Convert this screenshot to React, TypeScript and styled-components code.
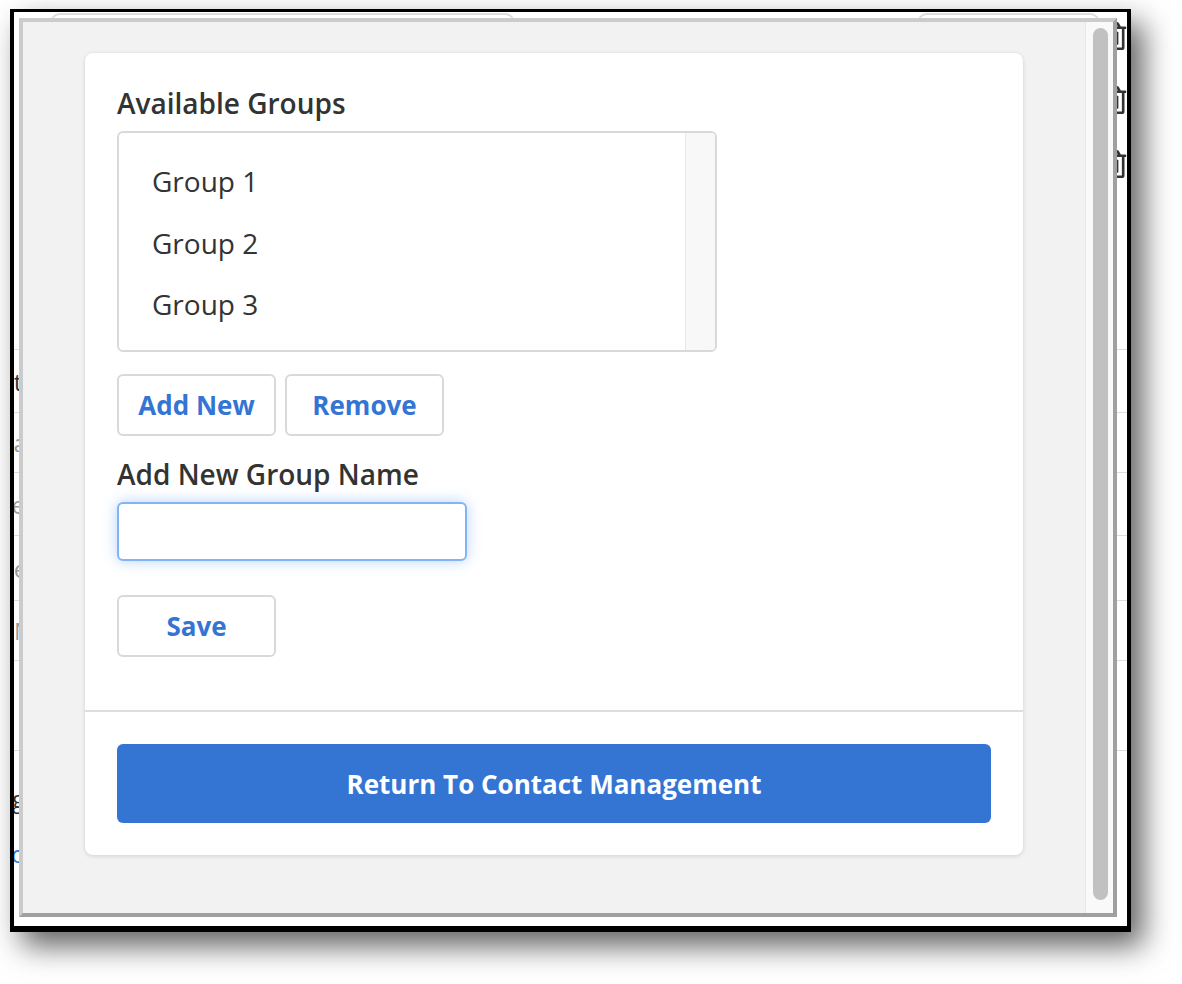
import React from 'react'
import styled, { createGlobalStyle } from 'styled-components'
import { FaRegTrashAlt } from 'react-icons/fa'

const GlobalStyle = createGlobalStyle`
  html, body {
    margin: 0;
    padding: 0;
    background: #fff;
  }
  body {
    font-family: 'Open Sans', 'Liberation Sans', sans-serif;
    color: #333;
  }
  * {
    box-sizing: border-box;
  }
`

const Stage = styled.div`
  width: 1182px;
  height: 984px;
  padding: 9px 0 0 10px;
  background: #fff;
  overflow: hidden;
`

const Window = styled.div`
  position: relative;
  width: 1121px;
  height: 923px;
  border: 4px solid #000;
  border-top-width: 3px;
  border-bottom-width: 6px;
  background: #fff;
  box-shadow: 12px 14px 28px rgba(0, 0, 0, 0.62);
  overflow: hidden;
`

// page behind the modal, only slivers of it show
const BgPage = styled.div`
  display: flex;
  flex-direction: column;
`

const TrashRow = styled.div`
  height: 64px;
  display: flex;
  align-items: flex-start;
  padding: 1px 0 0 36px;
`

const BgField = styled.div<{ $w: number; $ml?: number }>`
  width: ${p => p.$w}px;
  height: 50px;
  margin-left: ${p => p.$ml || 0}px;
  border: 2px solid #ddd;
  border-radius: 10px;
`

const TrashSlot = styled.div`
  margin: 9px 0 0 auto;
  width: 26px;
  color: #333;
  display: flex;
`

const BgSpacer = styled.div`
  height: 145px;
`

const BgRow = styled.div<{ $h: number }>`
  height: ${p => p.$h}px;
  display: flex;
  align-items: center;
  border-top: 1px solid #ddd;
  font-size: 24px;
  white-space: nowrap;
`

const BgCell = styled.div`
  display: flex;
  flex-direction: column;
  gap: 22px;
`

const BgLeft = styled.span<{ $color?: string; $shift: number }>`
  margin-left: -${p => p.$shift}px;
  color: ${p => p.$color || '#999'};
`

const BgRight = styled.span`
  margin-left: auto;
  width: 25px;
  overflow: hidden;
  color: #aaa;
`

const Modal = styled.div`
  position: absolute;
  left: 5px;
  top: 6px;
  width: 1098px;
  height: 899px;
  display: flex;
  border: 4px solid;
  border-color: #cbcbcb #a0a0a0 #a0a0a0 #cbcbcb;
  background: #f2f2f2;
`

const ScrollPane = styled.div`
  flex: 1;
  padding: 31px 62px 0;
  overflow: hidden;
`

const ScrollTrack = styled.div`
  width: 28px;
  display: flex;
  padding: 6px 5px 13px 7px;
  border-left: 1px solid #e6e6e6;
  background: #f9f9f9;
`

const Thumb = styled.div`
  flex: 1;
  background: #c1c1c1;
  border-radius: 8px;
`

const Card = styled.div`
  background: #fff;
  border-radius: 8px;
  box-shadow: 0 1px 4px rgba(0, 0, 0, 0.14);
`

const CardBody = styled.div`
  padding: 32px 32px 53px;
  border-bottom: 2px solid #ddd;
`

const CardFooter = styled.div`
  padding: 32px;
`

const Label = styled.div<{ $mt?: number }>`
  margin-top: ${p => p.$mt || 0}px;
  margin-bottom: 10px;
  font-size: 28px;
  line-height: 36px;
  font-weight: 600;
  color: #333;
`

const ListBox = styled.div`
  width: 600px;
  height: 221px;
  display: flex;
  border: 2px solid #d9d9d9;
  border-radius: 6px;
  overflow: hidden;
`

const ListItems = styled.div`
  flex: 1;
  padding: 18px 0 0 33px;
`

const ListItem = styled.div`
  height: 61.5px;
  line-height: 60px;
  font-size: 28px;
  color: #333;
`

const ListScroll = styled.div`
  width: 30px;
  border-left: 1px solid #e8e8e8;
  background: #f8f8f8;
`

const ButtonRow = styled.div`
  display: flex;
  gap: 9px;
  margin-top: 22px;
`

const OutlineButton = styled.button<{ $mt?: number }>`
  display: block;
  width: 159px;
  height: 62px;
  margin-top: ${p => p.$mt || 0}px;
  padding: 0;
  border: 2px solid #d9d9d9;
  border-radius: 6px;
  background: #fff;
  color: #3475d4;
  font-family: inherit;
  font-size: 26px;
  font-weight: 700;
`

const TextInput = styled.input`
  display: block;
  width: 350px;
  height: 59px;
  padding: 0 14px;
  border: 2px solid #80b4f3;
  border-radius: 6px;
  outline: none;
  font-family: inherit;
  font-size: 26px;
  box-shadow: 0 0 14px rgba(80, 150, 250, 0.42);
`

const PrimaryButton = styled.button`
  display: block;
  width: 100%;
  height: 79px;
  border: none;
  border-radius: 6px;
  background: #3475d4;
  color: #fff;
  font-family: inherit;
  font-size: 26px;
  font-weight: 700;
`

const groups = ['Group 1', 'Group 2', 'Group 3']

type BgLine = { text: string; shift: number; color?: string }

const bgRows: { h: number; left: BgLine[]; right?: string }[] = [
  { h: 63, left: [{ text: 'Data', shift: 31, color: '#333' }] },
  { h: 60, left: [{ text: 'Ma', shift: 22 }] },
  { h: 63, left: [{ text: 'Le', shift: 15 }], right: 'S' },
  { h: 65, left: [{ text: 'Re', shift: 15 }] },
  { h: 60, left: [{ text: 'N', shift: 0 }] },
  { h: 90, left: [], right: 'S' },
  {
    h: 150,
    left: [
      { text: 'g', shift: 2, color: '#333' },
      { text: 'o', shift: 3, color: '#3475d4' },
    ],
  },
]

const App = () => {
  return (
    <Stage>
      <GlobalStyle />
      <Window>
        <BgPage>
          <TrashRow>
            <BgField $w={465} />
            <BgField $w={183} $ml={402} />
            <TrashSlot><FaRegTrashAlt size={28} /></TrashSlot>
          </TrashRow>
          <TrashRow>
            <TrashSlot><FaRegTrashAlt size={28} /></TrashSlot>
          </TrashRow>
          <TrashRow>
            <TrashSlot><FaRegTrashAlt size={28} /></TrashSlot>
          </TrashRow>
          <BgSpacer />
          {bgRows.map((r, i) => (
            <BgRow key={i} $h={r.h}>
              <BgCell>
                {r.left.map((l, j) => (
                  <BgLeft key={j} $shift={l.shift} $color={l.color}>{l.text}</BgLeft>
                ))}
              </BgCell>
              {r.right && <BgRight>{r.right}</BgRight>}
            </BgRow>
          ))}
        </BgPage>

        <Modal>
          <ScrollPane>
            <Card>
              <CardBody>
                <Label>Available Groups</Label>
                <ListBox>
                  <ListItems>
                    {groups.map(g => (
                      <ListItem key={g}>{g}</ListItem>
                    ))}
                  </ListItems>
                  <ListScroll />
                </ListBox>
                <ButtonRow>
                  <OutlineButton>Add New</OutlineButton>
                  <OutlineButton>Remove</OutlineButton>
                </ButtonRow>
                <Label $mt={20}>Add New Group Name</Label>
                <TextInput type="text" />
                <OutlineButton $mt={34}>Save</OutlineButton>
              </CardBody>
              <CardFooter>
                <PrimaryButton>Return To Contact Management</PrimaryButton>
              </CardFooter>
            </Card>
          </ScrollPane>
          <ScrollTrack>
            <Thumb />
          </ScrollTrack>
        </Modal>
      </Window>
    </Stage>
  )
}

export default App
